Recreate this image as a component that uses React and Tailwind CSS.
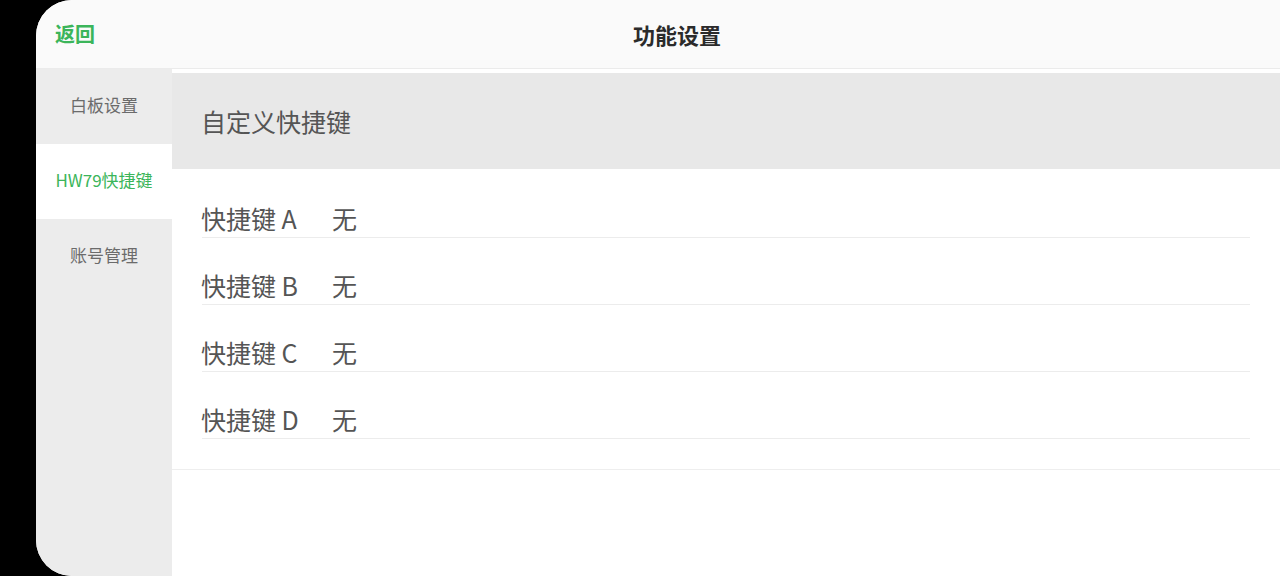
export default function App() {
  const menu = [
    { label: '白板设置', active: false },
    { label: 'HW79快捷键', active: true },
    { label: '账号管理', active: false },
  ];
  const keys = ['A', 'B', 'C', 'D'];

  return (
    <div
      className="w-[1280px] h-[576px] bg-black overflow-hidden"
      style={{ fontFamily: '"Noto Sans CJK SC", "Noto Sans", sans-serif' }}
    >
      <div className="ml-[36px] h-full bg-white rounded-l-[36px] overflow-hidden flex flex-col">
        <div className="h-[69px] shrink-0 bg-[#fafafa] border-b border-[#ebebeb] grid grid-cols-[138px_1fr_100px] items-center">
          <div className="pl-[19px] text-[20px] font-bold text-[#3bb55a]">返回</div>
          <div className="text-center text-[22px] font-bold text-[#2b2b2b]">功能设置</div>
          <div />
        </div>
        <div className="flex flex-1">
          <div className="w-[136px] shrink-0 bg-[#ececec]">
            {menu.map((m) => (
              <div
                key={m.label}
                className={`h-[75px] pb-[3px] flex items-center justify-center text-[17px] ${m.active ? 'bg-white text-[#3bb55a]' : 'text-[#6b6b6b]'}`}
              >
                {m.label}
              </div>
            ))}
          </div>
          <div className="flex-1">
            <div className="mt-[4px] h-[96px] pt-[1px] bg-[#e8e8e8] flex items-center pl-[29px] text-[25px] text-[#555]">
              自定义快捷键
            </div>
            <div className="pt-[2px] pl-[30px] pr-[30px] pb-[30px] border-b border-[#eeeeee]">
              {keys.map((k) => (
                <div key={k} className="h-[67px] flex items-end border-b border-[#ececec] text-[25px] text-[#555]">
                  <span className="w-[131px] -ml-[1px]">快捷键 {k}</span>
                  <span>无</span>
                </div>
              ))}
            </div>
          </div>
        </div>
      </div>
    </div>
  );
}
